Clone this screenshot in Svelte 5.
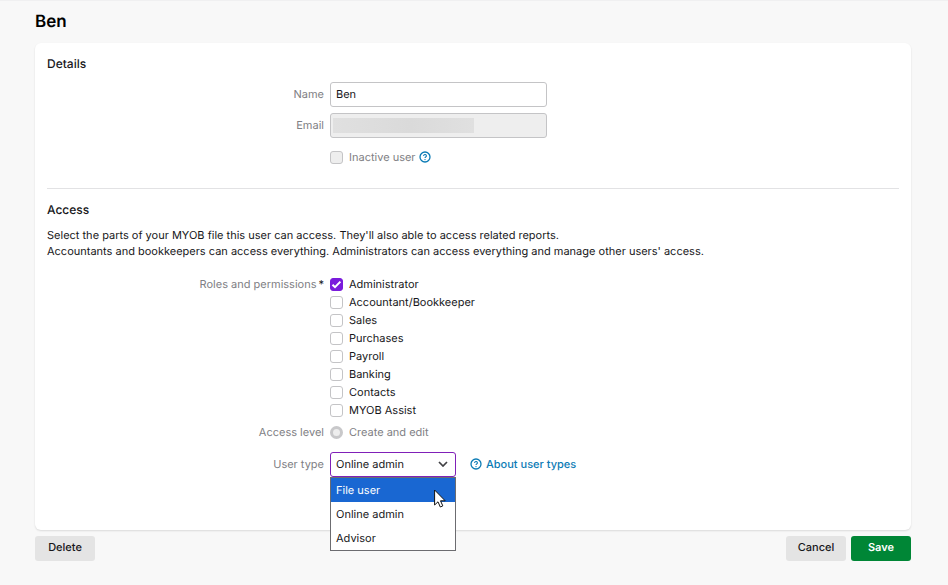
<script lang="ts">
  interface Role {
    id: string
    label: string
    checked: boolean
  }

  let name = $state('Ben')
  let userType = $state('Online admin')
  let highlighted = $state('File user')

  let roles = $state<Role[]>([
    { id: 'administrator', label: 'Administrator', checked: true },
    { id: 'accountant', label: 'Accountant/Bookkeeper', checked: false },
    { id: 'sales', label: 'Sales', checked: false },
    { id: 'purchases', label: 'Purchases', checked: false },
    { id: 'payroll', label: 'Payroll', checked: false },
    { id: 'banking', label: 'Banking', checked: false },
    { id: 'contacts', label: 'Contacts', checked: false },
    { id: 'assist', label: 'MYOB Assist', checked: false }
  ])

  const userTypes = ['File user', 'Online admin', 'Advisor']
</script>

{#snippet helpIcon()}
  <svg class="help-icon" viewBox="0 0 12 12" aria-hidden="true">
    <circle cx="6" cy="6" r="5" fill="none" stroke="currentColor" stroke-width="1.3" />
    <path
      d="M4.6 4.9a1.4 1.4 0 1 1 2.1 1.2c-.5.3-.7.5-.7 1"
      fill="none"
      stroke="currentColor"
      stroke-width="1.1"
    />
    <circle cx="6" cy="8.6" r=".7" fill="currentColor" />
  </svg>
{/snippet}

<main class="page">
  <h1>Ben</h1>

  <form id="user-form" class="card">
    <section>
      <h2>Details</h2>
      <div class="row">
        <label class="row-label" for="name">Name</label>
        <input id="name" class="text-input" type="text" bind:value={name} />
      </div>
      <div class="row row--spaced">
        <label class="row-label" for="email">Email</label>
        <input id="email" class="text-input text-input--hidden-value" type="email" disabled />
      </div>
      <div class="row row--inactive">
        <span class="row-label"></span>
        <div class="inline">
          <label class="choice choice--disabled">
            <input type="checkbox" disabled />
            Inactive user
          </label>
          <button class="help-button" type="button" aria-label="About inactive users">
            {@render helpIcon()}
          </button>
        </div>
      </div>
    </section>

    <hr />

    <section>
      <h2>Access</h2>
      <p>
        Select the parts of your MYOB file this user can access. They'll also able to access related reports.<br />
        Accountants and bookkeepers can access everything. Administrators can access everything and manage other users' access.
      </p>

      <div class="row row--roles" role="group" aria-labelledby="roles-label">
        <span id="roles-label" class="row-label">Roles and permissions<span class="required">*</span></span>
        <div class="roles">
          {#each roles as role (role.id)}
            <label class="choice">
              <input type="checkbox" bind:checked={role.checked} />
              {role.label}
            </label>
          {/each}
        </div>
      </div>

      <div class="row row--level" role="radiogroup" aria-labelledby="level-label">
        <span id="level-label" class="row-label">Access level</span>
        <label class="choice choice--disabled">
          <input type="radio" name="level" disabled />
          Create and edit
        </label>
      </div>

      <div class="row row--type">
        <label class="row-label" for="user-type">User type</label>
        <div class="inline inline--type">
          <div class="select">
            <select id="user-type" bind:value={userType}>
              {#each userTypes as type}
                <option value={type}>{type}</option>
              {/each}
            </select>
            <svg class="chevron" viewBox="0 0 10 6" aria-hidden="true">
              <path d="M1 1l4 4 4-4" fill="none" stroke="#404044" stroke-width="1.7" />
            </svg>
            <ul class="menu" role="listbox" aria-label="User type">
              {#each userTypes as type}
                <li
                  role="option"
                  aria-selected={type === userType}
                  class:highlighted={type === highlighted}
                  onmouseenter={() => (highlighted = type)}
                >
                  {type}
                </li>
              {/each}
            </ul>
            <svg class="pointer" viewBox="0 0 12 19" aria-hidden="true">
              <path
                d="M.6 1v15l3.4-3.2 2.3 5.2 2.5-1.1-2.3-5.1h4.7z"
                fill="#fff"
                stroke="#111"
                stroke-width="1"
                stroke-linejoin="round"
              />
            </svg>
          </div>
          <a href="#user-types">{@render helpIcon()}About user types</a>
        </div>
      </div>
    </section>
  </form>

  <div class="actions">
    <button type="button">Delete</button>
    <div class="actions-end">
      <button type="button">Cancel</button>
      <button class="primary" type="submit" form="user-form">Save</button>
    </div>
  </div>
</main>

<style>
  :global(body) {
    background: #f8f8f8;
  }

  .page {
    padding: 11px 37px 24px 35px;
    border-top: 1px solid #f0f0f1;
    font: 11px/16px Inter, "Liberation Sans", sans-serif;
    text-rendering: geometricPrecision;
    color: #17171a;
  }

  h1 {
    margin: 0 0 11px;
    font-size: 17px;
    line-height: 20px;
    font-weight: 600;
    color: #000;
  }

  h2 {
    margin: 0 0 9px;
    font-size: 12px;
    line-height: 18px;
    font-weight: 500;
  }

  p {
    margin: -1px 0 0;
  }

  hr {
    margin: 22px 0 12px;
    border: 0;
    border-top: 1px solid #e2e2e4;
  }

  .card {
    padding: 12px 12px 53px;
    background: #fff;
    border-radius: 6px;
    box-shadow: 0 1px 2px rgba(0, 0, 0, 0.12);
  }

  .row {
    display: grid;
    grid-template-columns: 277px 1fr;
    column-gap: 6px;
    align-items: center;
  }

  .row--spaced {
    margin-top: 6px;
  }

  .row--inactive {
    margin-top: 10px;
  }

  .row--roles {
    align-items: start;
    margin-top: 16px;
  }

  .row--level {
    margin-top: 4px;
  }

  .row--type {
    margin-top: 11px;
  }

  .row-label {
    line-height: 17px;
    text-align: right;
    color: #808084;
  }

  .row--roles .row-label {
    line-height: 18px;
  }

  .required {
    margin-left: 2px;
    color: #17171a;
  }

  .text-input,
  select {
    box-sizing: border-box;
    height: 25px;
    margin: 0;
    padding: 0 5px 1px;
    border: 1px solid #c4c4c6;
    border-radius: 3px;
    background: #fff;
    font: inherit;
    text-rendering: inherit;
    color: inherit;
  }

  .text-input {
    width: 217px;
  }

  .text-input--hidden-value {
    background: linear-gradient(90deg, #e0e0e0, #dadada 55%, #e0e0e0) 2px center / 141px 15px no-repeat #eeeeee;
  }

  .inline {
    display: flex;
    align-items: center;
    gap: 3px;
  }

  .inline--type {
    gap: 14px;
  }

  .roles {
    display: flex;
    flex-direction: column;
    align-items: flex-start;
  }

  .choice {
    display: flex;
    align-items: center;
    gap: 6px;
    line-height: 18px;
  }

  .choice--disabled {
    color: #808084;
  }

  .choice input {
    appearance: none;
    box-sizing: border-box;
    width: 13px;
    height: 13px;
    margin: 0;
    border: 1px solid #c4c4c6;
    border-radius: 3px;
    background: #fff;
  }

  .choice input:disabled {
    background: #eeeeee;
  }

  .choice input:checked {
    border-color: #7a1bdc;
    background: #7a1bdc url("data:image/svg+xml,%3Csvg xmlns='http://www.w3.org/2000/svg' viewBox='0 0 11 11'%3E%3Cpath d='M1.5 5.8l2.5 2.4 5.4-5.6' fill='none' stroke='%23fff' stroke-width='2'/%3E%3C/svg%3E") center / 11px 11px no-repeat;
  }

  .choice input[type="radio"] {
    border: 3px solid #c8c8ca;
    border-radius: 50%;
  }

  .help-icon {
    width: 12px;
    height: 12px;
    flex: none;
  }

  .help-button {
    display: flex;
    padding: 0;
    border: 0;
    background: none;
    color: #0b7bb5;
  }

  a {
    display: flex;
    align-items: center;
    gap: 4px;
    line-height: 17px;
    padding-bottom: 1px;
    color: #0b7bb5;
    font-weight: 500;
    text-decoration: none;
  }

  .select {
    position: relative;
    width: 126px;
  }

  select {
    display: block;
    width: 100%;
    appearance: none;
    border-color: #8020b8;
  }

  .chevron {
    position: absolute;
    top: 9px;
    right: 8px;
    width: 10px;
    height: 6px;
    pointer-events: none;
  }

  .menu {
    position: absolute;
    top: 100%;
    left: 0;
    right: 0;
    margin: 0;
    padding: 0;
    border: 1px solid #6c6c70;
    background: #fff;
    list-style: none;
  }

  .menu li {
    padding: 0 5px;
    line-height: 24px;
  }

  .menu .highlighted {
    background: #1967d2;
    color: #fff;
  }

  .pointer {
    position: absolute;
    top: 37px;
    right: 10px;
    width: 12px;
    height: 19px;
    pointer-events: none;
  }

  .actions {
    display: flex;
    justify-content: space-between;
    margin-top: 6px;
  }

  .actions-end {
    display: flex;
    gap: 5px;
  }

  .actions button {
    min-width: 60px;
    height: 25px;
    padding: 0 11px 3px;
    border: 0;
    border-radius: 3px;
    background: #e4e4e4;
    font: inherit;
    font-weight: 500;
    text-rendering: inherit;
    color: inherit;
  }

  .actions .primary {
    background: #008636;
    font-weight: 600;
    color: #fff;
  }
</style>
